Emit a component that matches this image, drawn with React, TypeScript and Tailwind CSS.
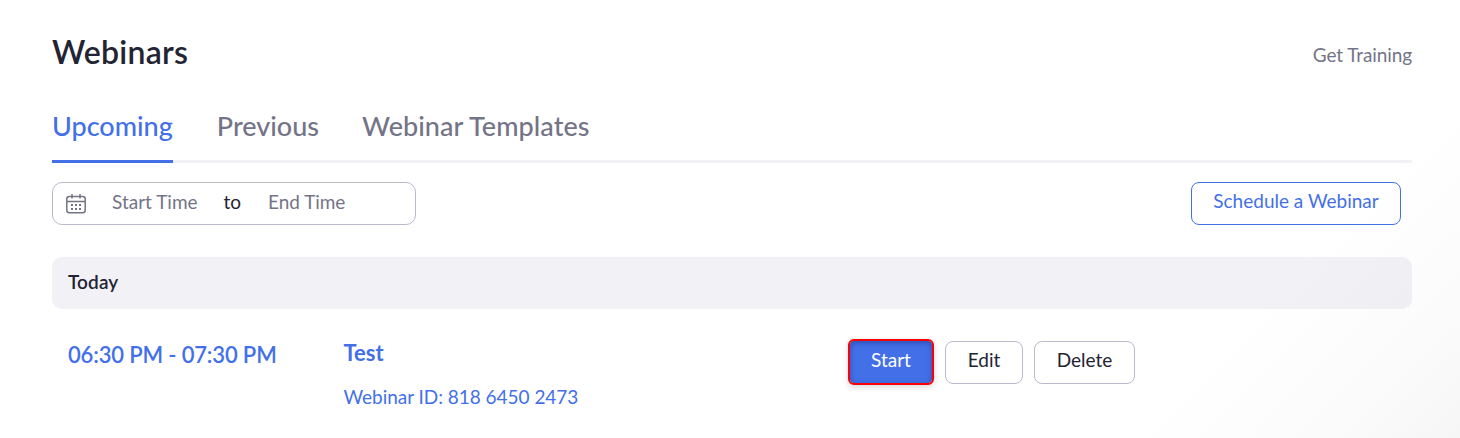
import React from "react";

const dots = [
  [6, 10], [10, 10], [14, 10],
  [6, 14], [10, 14], [14, 14],
];

function CalendarIcon() {
  return (
    <svg width="20" height="20" viewBox="0 0 20 20" fill="none" stroke="#747487" strokeWidth="1.5" className="mt-0.5 shrink-0">
      <rect x="0.8" y="2.4" width="18.4" height="16.4" rx="2.5" />
      <path d="M1 7.4h18M6 0v4.6M14 0v4.6" />
      <g fill="#747487" stroke="none">
        {dots.map(([x, y]) => (
          <rect key={`${x}-${y}`} x={x - 1} y={y} width="2" height="2" />
        ))}
      </g>
    </svg>
  );
}

export default function App() {
  return (
    <div className="h-[438px] w-[1460px] overflow-hidden bg-[linear-gradient(135deg,#fff_0%,#fff_82%,#fcfcfc_91%,#f6f6f6_100%)] pl-[52px] pr-12 pt-8 font-[Lato,sans-serif] text-[#232333]">
      <header className="flex h-10 items-center justify-between">
        <h1 className="text-[32px] font-semibold leading-10 tracking-[0.25px]">Webinars</h1>
        <a className="pt-1.5 text-[19px] tracking-[-0.1px] text-[#747487]">Get Training</a>
      </header>
      <nav className="mt-[27px] flex h-16 gap-11 border-b-[3px] border-[#f1f1f6] text-[27px] font-medium leading-[54px] text-[#747487]">
        <a className="h-16 border-b-[3px] border-[#4370e9] text-[#4370e9]">Upcoming</a>
        <a>Previous</a>
        <a className="-ml-px tracking-[0.06px]">Webinar Templates</a>
      </nav>
      <div className="mt-[19px] flex h-[43px] justify-between pr-[11px] text-[19px]">
        <div className="flex w-[364px] items-center rounded-[10px] border border-[#babacc] pb-0.5 pl-[13px] text-[#747487]">
          <CalendarIcon />
          <span className="ml-[26px]">Start Time</span>
          <span className="ml-[26px] text-[#232333]">to</span>
          <span className="ml-[27px] tracking-[-0.05px]">End Time</span>
        </div>
        <button className="w-[210px] rounded-[8px] border border-[#4370e9] pb-1 text-[#4370e9]">Schedule a Webinar</button>
      </div>
      <h2 className="mt-8 flex h-[52px] items-center rounded-[10px] bg-[#1a1a6b]/6 pb-0.5 pl-4 text-[19px] font-semibold tracking-[0.1px]">Today</h2>
      <section className="flex pl-4 pt-[30px]">
        <div className="w-[275.5px] text-[22px] font-semibold leading-[31px] tracking-[-0.15px] text-[#4370e9]">06:30 PM - 07:30 PM</div>
        <div className="w-[504.5px] text-[#4370e9]">
          <div className="text-[22px] font-bold leading-[27px]">Test</div>
          <div className="mt-[17px] text-[19px] leading-[28px] tracking-[-0.03px]">Webinar ID: 818 6450 2473</div>
        </div>
        <div className="flex h-[46px] items-center text-[19px]">
          <button className="h-[46px] w-[86px] rounded-[6px] border-2 border-[#fb0007] bg-[#4370e9] bg-clip-padding pb-1 text-white shadow-[0_2px_6px_rgba(0,0,0,0.16),inset_0_2px_6px_rgba(0,0,60,0.32)]">Start</button>
          <button className="ml-[11px] h-[43px] w-[78px] rounded-[8px] border border-[#babacc] pb-1">Edit</button>
          <button className="ml-[11px] h-[43px] w-[101px] rounded-[8px] border border-[#babacc] pb-1">Delete</button>
        </div>
      </section>
    </div>
  );
}
